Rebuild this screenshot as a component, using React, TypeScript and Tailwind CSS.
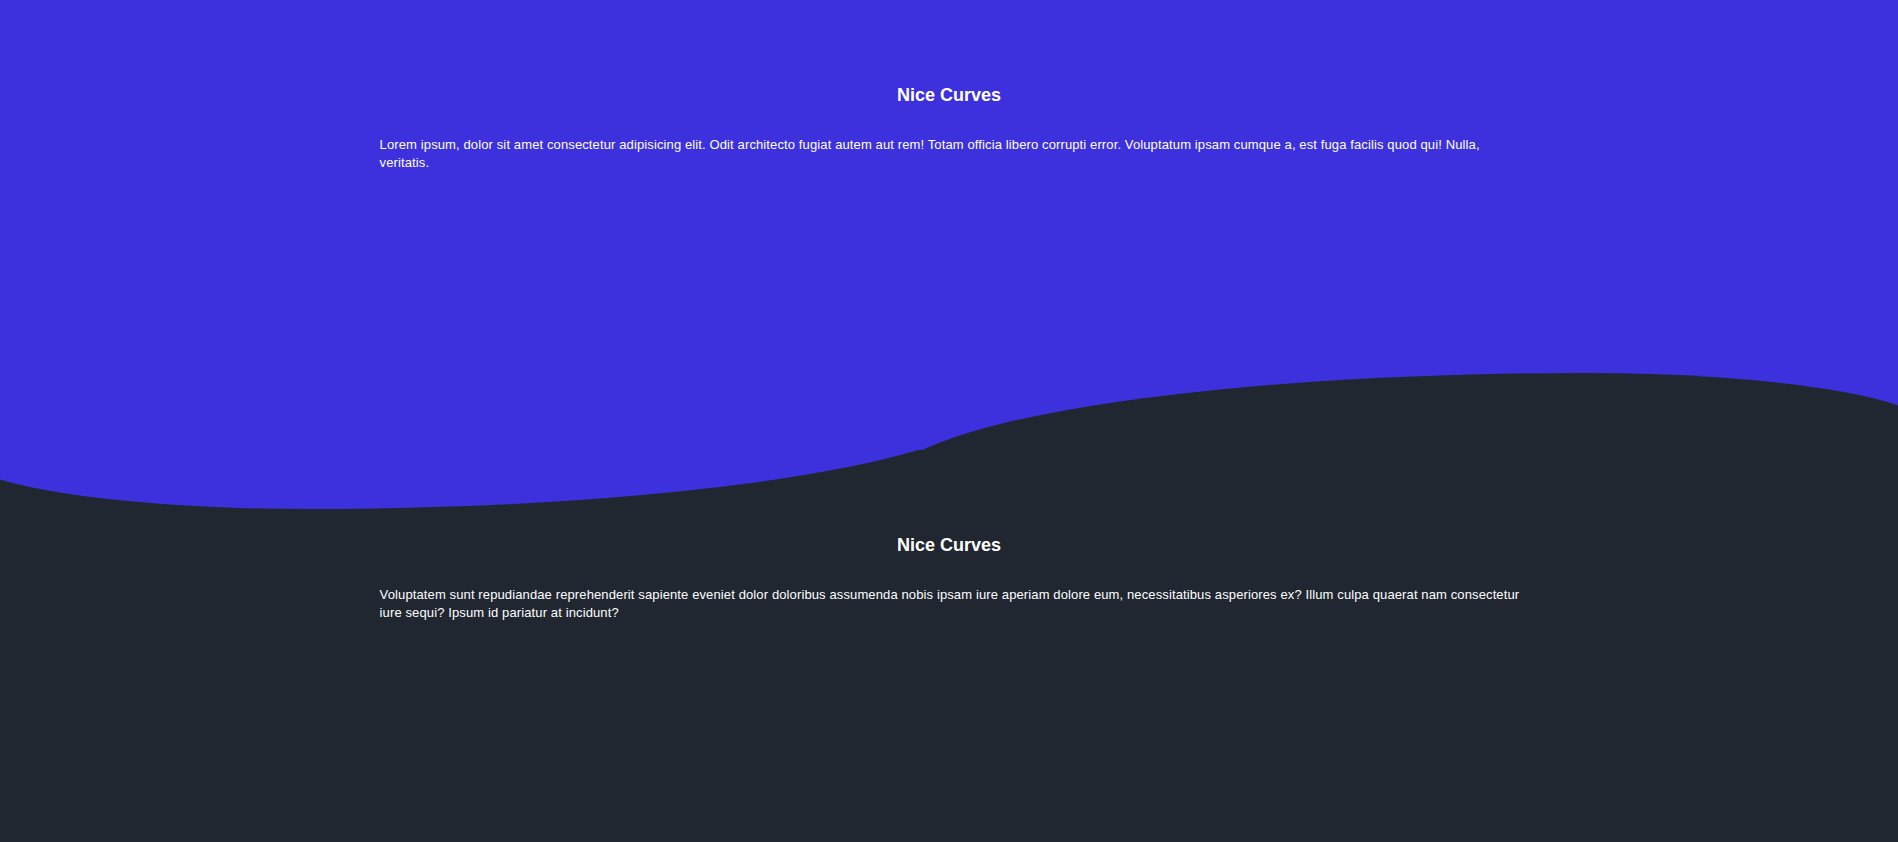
export default function App() {
    return (
        <div className="relative h-[842px] w-full overflow-hidden bg-[#202731] text-white font-['Liberation_Sans',Arial,sans-serif]">
            <section className="relative h-[450px] bg-[#3c31dd] px-[20vw] pt-[81px]">
                <h2 className="text-center text-[18px] font-bold leading-[28px]">
                    Nice Curves
                </h2>
                <p className="mt-[27px] mr-[-10px] text-[13px] leading-[18px] tracking-[0.12px]">
                    Lorem ipsum, dolor sit amet consectetur adipisicing elit.
                    Odit architecto fugiat autem aut rem! Totam officia libero
                    corrupti error. Voluptatum ipsam cumque a, est fuga facilis
                    quod qui! Nulla, veritatis.
                </p>

                {/* curve blobs */}
                <div className="absolute left-[-42px] top-[340px] h-[169px] w-[55%] rounded-[100%_50%] bg-[#3c31dd]"></div>
                <div className="absolute left-[887px] top-[373px] h-[169px] w-[55%] rounded-[100%_50%] bg-[#202731]"></div>
            </section>

            <section className="h-[392px] px-[20vw] pt-[81px]">
                <h2 className="text-center text-[18px] font-bold leading-[28px]">
                    Nice Curves
                </h2>
                <p className="mt-[27px] mr-[-10px] text-[13px] leading-[18px] tracking-[0.12px]">
                    Voluptatem sunt repudiandae reprehenderit sapiente eveniet
                    dolor doloribus assumenda nobis ipsam iure aperiam dolore
                    eum, necessitatibus asperiores ex? Illum culpa quaerat nam
                    consectetur iure sequi? Ipsum id pariatur at incidunt?
                </p>
            </section>
        </div>
    )
}
